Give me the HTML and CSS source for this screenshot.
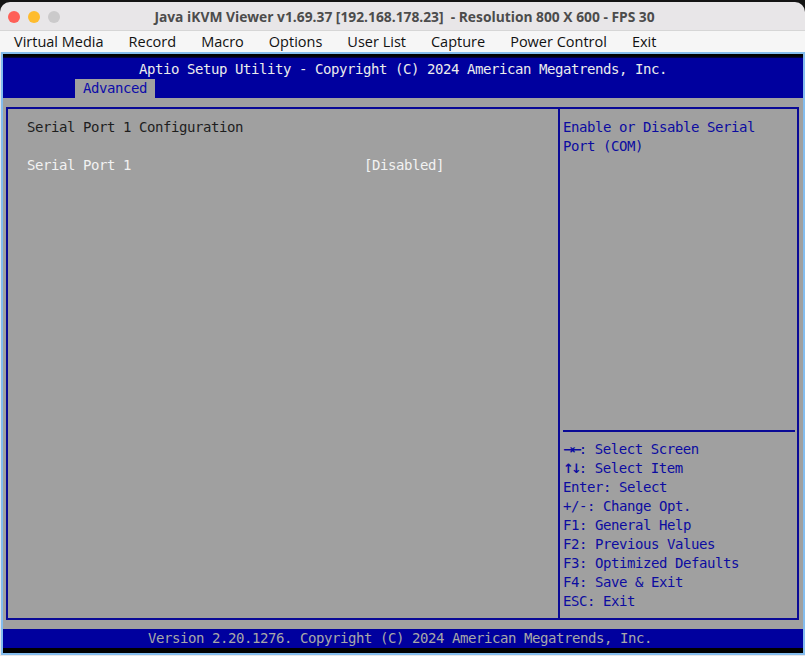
FILE: index.html
```html
<!DOCTYPE html>
<html lang="en">
<head>
    <meta charset="UTF-8">
    <title>Java iKVM Viewer</title>
    <link rel="stylesheet" href="styles.css">
</head>
<body>
    <div class="window">
        <div class="titlebar">
            <div class="lights">
                <span class="light red"></span>
                <span class="light yellow"></span>
                <span class="light gray"></span>
            </div>
            <div class="title">Java iKVM Viewer v1.69.37 [192.168.178.23]  - Resolution 800 X 600 - FPS 30</div>
        </div>

        <div class="menubar">
            <span class="menu-item">Virtual Media</span>
            <span class="menu-item">Record</span>
            <span class="menu-item">Macro</span>
            <span class="menu-item">Options</span>
            <span class="menu-item">User List</span>
            <span class="menu-item">Capture</span>
            <span class="menu-item">Power Control</span>
            <span class="menu-item">Exit</span>
        </div>

        <div class="frame">
            <div class="screen">
                <div class="black-top"></div>
                <div class="bios-header">Aptio Setup Utility - Copyright (C) 2024 American Megatrends, Inc.</div>
                <div class="tab-row"><span class="tab">Advanced</span></div>

                <div class="bios-main">
                    <div class="bios-box">
                        <div class="settings">
                            <div class="row title-row">Serial Port 1 Configuration</div>
                            <div class="row"></div>
                            <div class="row option">
                                <span class="option-name">Serial Port 1</span>
                                <span class="option-value">[Disabled]</span>
                            </div>
                        </div>

                        <div class="help">
                            <div class="help-text">
                                <div class="row">Enable or Disable Serial</div>
                                <div class="row">Port (COM)</div>
                            </div>
                            <div class="keys">
                                <div class="keys-sep"></div>
                                <div class="row"><b class="arrow">→←</b>: Select Screen</div>
                                <div class="row"><b class="arrow">↑↓</b>: Select Item</div>
                                <div class="row">Enter: Select</div>
                                <div class="row">+/-: Change Opt.</div>
                                <div class="row">F1: General Help</div>
                                <div class="row">F2: Previous Values</div>
                                <div class="row">F3: Optimized Defaults</div>
                                <div class="row">F4: Save &amp; Exit</div>
                                <div class="row">ESC: Exit</div>
                            </div>
                        </div>
                    </div>
                </div>

                <div class="bios-footer">Version 2.20.1276. Copyright (C) 2024 American Megatrends, Inc.</div>
                <div class="black-bottom"></div>
            </div>
        </div>
    </div>
</body>
</html>
```

FILE: styles.css
```css
/* ventana del visor KVM */
body {
    margin: 0;
    background-color: #141414;
    width: 805px;
    height: 656px;
    overflow: hidden;
}

.window {
    margin-top: 2px;
    height: 654px;
    background-color: #e8e6e8;
    border-radius: 10px 10px 0 0;
    overflow: hidden;
}

.titlebar {
    height: 28px;
    display: flex;
    align-items: center;
}

.lights {
    display: flex;
    gap: 8px;
    padding-left: 8px;
    padding-top: 1px;
}

.light {
    width: 12px;
    height: 12px;
    border-radius: 50%;
}

.red { background-color: #fe5f57; }
.yellow { background-color: #febc2e; }
.gray { background-color: #cbcacb; }

.title {
    flex-grow: 1;
    text-align: center;
    font-family: "Open Sans", "Liberation Sans", sans-serif;
    font-weight: bold;
    font-size: 13.8px;
    color: #4c4c4c;
    white-space: pre;
    margin-left: -64px;
    margin-right: -8px;
}

.menubar {
    height: 21px;
    background-color: #f6f6f6;
    border-top: 1px solid #d6d6d6;
    display: flex;
    align-items: center;
    padding-left: 14px;
    font-family: "Open Sans", "Liberation Sans", sans-serif;
    font-size: 14.5px;
    color: #111;
}

.menu-item {
    margin-right: 25px;
}

/* pantalla remota */
.frame {
    margin-left: 1px;
    border: 2px solid #84bdee;
    width: 800px;
}

.screen {
    height: 599px;
    display: flex;
    flex-direction: column;
    font-family: "DejaVu Sans Mono", "Liberation Mono", monospace;
    font-size: 14px;
    letter-spacing: -0.43px;
    line-height: 19px;
}

.row {
    height: 19px;
    white-space: pre;
}

.black-top {
    height: 4px;
    background: linear-gradient(#000 50%, #000050);
}

.bios-header {
    height: 21px;
    padding-top: 2px;
    box-sizing: border-box;
    padding-left: 136px;
    background-color: #00009e;
    color: #ececec;
}

.tab-row {
    height: 19px;
    background-color: #00009e;
    padding-left: 72px;
}

.tab {
    display: inline-block;
    height: 19px;
    padding: 0 8px;
    background-color: #a0a0a0;
    color: #0c0ca8;
}

.bios-main {
    height: 531px;
    background-color: #a0a0a0;
    padding: 9px 0 0 3px;
    box-sizing: border-box;
}

.bios-box {
    width: 793px;
    height: 513px;
    box-sizing: border-box;
    border: 2px solid #0a0a96;
    display: grid;
    grid-template-columns: 550px 239px;
}

.settings {
    padding: 9px 0 0 19px;
}

.title-row {
    color: #1e1e1e;
}

.option {
    display: flex;
    color: #f2f2f2;
}

.option-name {
    width: 337px;
}

.help {
    border-left: 2px solid #0a0a96;
    padding: 9px 0 0 3px;
    display: flex;
    flex-direction: column;
    justify-content: space-between;
    color: #0c0ca0;
}

.keys {
    padding-bottom: 7px;
}

.arrow {
    font-family: "DejaVu Sans", sans-serif;
    font-weight: bold;
    font-size: 13px;
    letter-spacing: -3px;
}

.keys-sep {
    height: 2px;
    background-color: #0a0a96;
    margin: 0 2px 8px 0;
}

.bios-footer {
    height: 19px;
    background-color: #00009e;
    color: #a8a8a8;
    padding-left: 145px;
    white-space: pre;
}

.black-bottom {
    flex-grow: 1;
    background-color: #000;
}
```
